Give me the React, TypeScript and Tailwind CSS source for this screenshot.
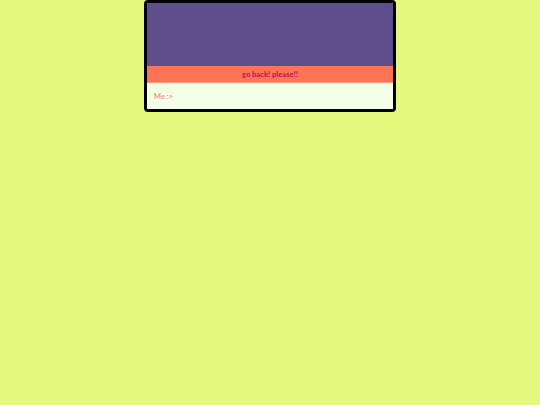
export default function App() {
  return (
    <div className="min-h-[405px] w-full bg-[#e4f97e] font-['Lato',sans-serif]">
      <div className="mx-auto w-[252px] overflow-hidden rounded-[4px] border-[3px] border-black">
        <div className="h-[63px] bg-[#5e4e8b]" />
        <div className="flex h-[17px] items-center justify-center border-b border-[#ff9a7c] bg-[#ff7454] pt-px text-[7.5px] font-extrabold text-[#c8235a]">
          go back! please!!
        </div>
        <div className="flex h-[26px] items-center bg-[#f4fde6] px-[7px] pt-px text-[7.5px] font-semibold text-[#f08c72]">
          Me :&gt;
        </div>
      </div>
    </div>
  );
}
